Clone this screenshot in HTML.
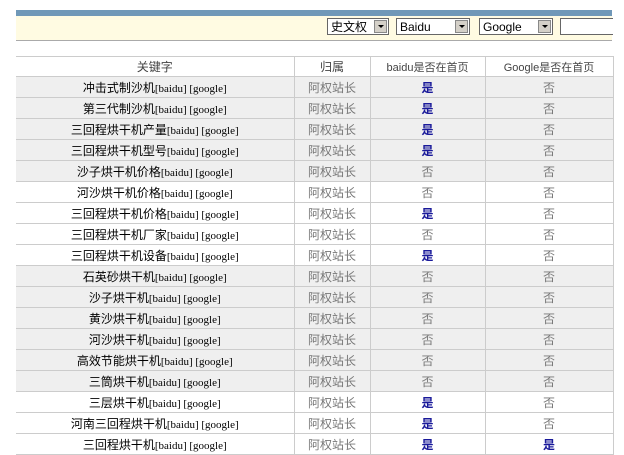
<!DOCTYPE html>
<html><head><meta charset="utf-8"><style>
body{margin:0;width:624px;height:450px;overflow:hidden;background:#fff;font-family:"Liberation Sans","Noto Sans CJK SC","WenQuanYi Zen Hei",sans-serif;font-size:12px;color:#333;position:relative}
.bar{position:absolute;left:16px;top:10px;width:596px;height:6px;background:#7098b8}
.yel{position:absolute;left:16px;top:16px;width:596px;height:24px;background:#fffbe2;border-bottom:1px solid #aaa}
.sel{position:absolute;top:18px;height:17px;border:1px solid #666;background:#fff;font-size:12px;line-height:17px;padding-left:3px;box-sizing:border-box;color:#000}
.sel i{position:absolute;right:1px;top:1px;width:13px;height:13px;background:#d4d0c8;border:1px solid #888;box-sizing:border-box}
.sel i:after{content:"";position:absolute;left:3px;top:4px;border-left:3px solid transparent;border-right:3px solid transparent;border-top:3px solid #000}
table{position:absolute;left:16px;top:56px;border-collapse:collapse;width:597px;table-layout:fixed}
td{border:1px solid #ccc;height:20px;padding:0;text-align:center;font-size:12px;white-space:nowrap;overflow:hidden}
td:first-child{border-left:none}
tr.h td{height:19px;color:#444;background:#fff}
td.k{color:#000;font-family:"Liberation Serif","Noto Sans CJK SC",serif;font-size:11px}
td.k b{font-weight:normal;font-family:"Noto Sans CJK SC",sans-serif;font-size:12px}
td.o{color:#777}
.y{color:#1a1a9a;font-weight:bold}
.n{color:#777}
tr.g td{background:#efefef}
</style></head><body>
<div class="bar"></div>
<div class="yel"></div>
<div class="sel" style="left:327px;width:62px">史文权<i></i></div>
<div class="sel" style="left:396px;width:74px">Baidu<i></i></div>
<div class="sel" style="left:479px;width:74px">Google<i></i></div>
<div class="sel" style="left:560px;width:53px;border-right:none"></div>
<table>
<colgroup><col style="width:278px"><col style="width:76px"><col style="width:115px"><col style="width:128px"></colgroup>
<tr class="h"><td>关键字</td><td>归属</td><td style="font-size:11px">baidu是否在首页</td><td style="font-size:11px">Google是否在首页</td></tr>
<tr class="g"><td class="k"><b>冲击式制沙机</b>[baidu] [google]</td><td class="o">阿权站长</td><td class="y">是</td><td class="n">否</td></tr>
<tr class="g"><td class="k"><b>第三代制沙机</b>[baidu] [google]</td><td class="o">阿权站长</td><td class="y">是</td><td class="n">否</td></tr>
<tr class="g"><td class="k"><b>三回程烘干机产量</b>[baidu] [google]</td><td class="o">阿权站长</td><td class="y">是</td><td class="n">否</td></tr>
<tr class="g"><td class="k"><b>三回程烘干机型号</b>[baidu] [google]</td><td class="o">阿权站长</td><td class="y">是</td><td class="n">否</td></tr>
<tr class="g"><td class="k"><b>沙子烘干机价格</b>[baidu] [google]</td><td class="o">阿权站长</td><td class="n">否</td><td class="n">否</td></tr>
<tr><td class="k"><b>河沙烘干机价格</b>[baidu] [google]</td><td class="o">阿权站长</td><td class="n">否</td><td class="n">否</td></tr>
<tr><td class="k"><b>三回程烘干机价格</b>[baidu] [google]</td><td class="o">阿权站长</td><td class="y">是</td><td class="n">否</td></tr>
<tr><td class="k"><b>三回程烘干机厂家</b>[baidu] [google]</td><td class="o">阿权站长</td><td class="n">否</td><td class="n">否</td></tr>
<tr><td class="k"><b>三回程烘干机设备</b>[baidu] [google]</td><td class="o">阿权站长</td><td class="y">是</td><td class="n">否</td></tr>
<tr class="g"><td class="k"><b>石英砂烘干机</b>[baidu] [google]</td><td class="o">阿权站长</td><td class="n">否</td><td class="n">否</td></tr>
<tr class="g"><td class="k"><b>沙子烘干机</b>[baidu] [google]</td><td class="o">阿权站长</td><td class="n">否</td><td class="n">否</td></tr>
<tr class="g"><td class="k"><b>黄沙烘干机</b>[baidu] [google]</td><td class="o">阿权站长</td><td class="n">否</td><td class="n">否</td></tr>
<tr class="g"><td class="k"><b>河沙烘干机</b>[baidu] [google]</td><td class="o">阿权站长</td><td class="n">否</td><td class="n">否</td></tr>
<tr class="g"><td class="k"><b>高效节能烘干机</b>[baidu] [google]</td><td class="o">阿权站长</td><td class="n">否</td><td class="n">否</td></tr>
<tr class="g"><td class="k"><b>三筒烘干机</b>[baidu] [google]</td><td class="o">阿权站长</td><td class="n">否</td><td class="n">否</td></tr>
<tr><td class="k"><b>三层烘干机</b>[baidu] [google]</td><td class="o">阿权站长</td><td class="y">是</td><td class="n">否</td></tr>
<tr><td class="k"><b>河南三回程烘干机</b>[baidu] [google]</td><td class="o">阿权站长</td><td class="y">是</td><td class="n">否</td></tr>
<tr><td class="k"><b>三回程烘干机</b>[baidu] [google]</td><td class="o">阿权站长</td><td class="y">是</td><td class="y">是</td></tr>
</table>
</body></html>
